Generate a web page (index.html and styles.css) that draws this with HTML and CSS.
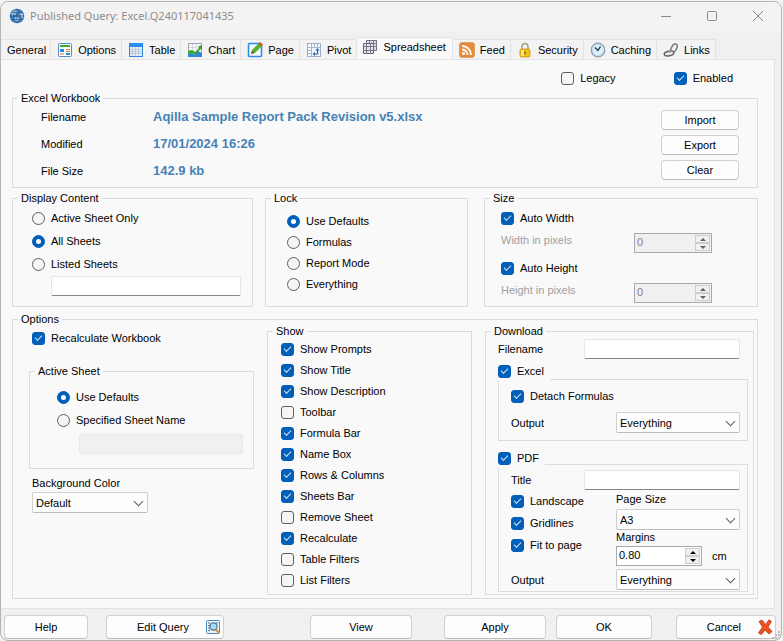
FILE: index.html
```html
<!DOCTYPE html>
<html lang="en">
<head>
    <meta charset="UTF-8">
    <meta name="viewport" content="width=device-width, initial-scale=1.0">
    <title>Published Query: Excel.Q240117041435</title>
    <link rel="stylesheet" href="styles.css">
</head>
<body>
    <div class="window">
        <header class="titlebar">
            <svg class="icon" viewBox="0 0 16 16">
                <circle cx="8" cy="8" r="7.3" fill="#3d7fb8"/>
                <path d="M2 5l4-3 3 1-2 3-3 2zM10 4l4 2v4l-3-1zM5 10l4-1 2 3-4 2z" fill="#b5d8ee"/>
                <path d="M1 8h14M8 1v14M2.500 4.500h11M2.500 11.500h11M8 1C3.500 4 3.500 12 8 15M8 1c4.500 3 4.500 11 0 14" fill="none" stroke="#1f558c" stroke-width=".7"/>
            </svg>
            <span class="title">Published Query: Excel.Q240117041435</span>
            <button class="win-btn" aria-label="Minimize"><svg viewBox="0 0 12 12"><path d="M1 6.500h10"/></svg></button>
            <button class="win-btn" aria-label="Maximize"><svg viewBox="0 0 12 12"><rect x="1.500" y="1.500" width="9" height="9" rx="1"/></svg></button>
            <button class="win-btn" aria-label="Close"><svg viewBox="0 0 12 12"><path d="M1 1l10 10M11 1L1 11"/></svg></button>
        </header>

        <nav class="tabs" role="tablist">
            <button class="tab" role="tab">General</button>
            <button class="tab" role="tab">
                <svg class="icon" viewBox="0 0 16 16"><rect x="1.500" y="1.500" width="13" height="13" rx="1" fill="#fff" stroke="#5b8cc4"/><path d="M3 3h10v2H3z" fill="#3faa28"/><path d="M3 7h4v3H3z" fill="#1c8df0"/><path d="M9 7h4v1H9zM9 9h4v1H9zM3 11.500h4v1H3z" fill="#e07a2c"/><path d="M9 11h4v2H9z" fill="#1c8df0"/></svg>
                Options
            </button>
            <button class="tab" role="tab">
                <svg class="icon" viewBox="0 0 16 16"><rect x="1.500" y="1.500" width="13" height="13" fill="#e9f1fa" stroke="#2e86e0"/><path d="M1 1h14v4H1z" fill="#2b8df2"/><path d="M2 7.500h12M2 9.500h12M2 11.500h12M4.500 5v9M7.500 5v9M10.500 5v9" stroke="#aab9cc" stroke-width=".7"/></svg>
                Table
            </button>
            <button class="tab" role="tab">
                <svg class="icon" viewBox="0 0 16 16"><rect x="1.500" y="1.500" width="13" height="13" fill="#f7f7f7" stroke="#9aa5b0"/><path d="M5.500 2v8M9.500 2v5M2 5.500h8" stroke="#c3cbd3" stroke-width=".7"/><path d="M1 15v-3l4-1 3 2 3-4 4 2v4z" fill="#2f86e0"/><path d="M1 9l4-1 3 2 4-4-1-1.500 4-1.500v5l-1.500-1L8 13l-3-2-4 1.500z" fill="#36a52e"/></svg>
                Chart
            </button>
            <button class="tab" role="tab">
                <svg class="icon" viewBox="0 0 16 16"><rect x="1.500" y="1.500" width="13" height="13" rx="1" fill="#f4faff" stroke="#2e8be6" stroke-width="1.500"/><path d="M4 12l1-4 7-7 3 3-7 7z" fill="#55b233"/><path d="M4 12l1-3.500L7.500 11z" fill="#7a5a32"/><path d="M11.500 1.500L13 0l3 3-1.500 1.500z" fill="#e04a3a"/></svg>
                Page
            </button>
            <button class="tab" role="tab">
                <svg class="icon" viewBox="0 0 16 16"><rect x="1.500" y="1.500" width="13" height="13" fill="#f3f6fa" stroke="#9fb0c4"/><path d="M1.500 5.500h13M5.500 1.500v13M8.500 2v3M11.500 2v3M2 8.500h3M2 11.500h3" stroke="#a9b7c8"/><path d="M8 12h3.500V7" fill="none" stroke="#2763ad" stroke-width="1.200"/><path d="M9.500 8.500l2-2.500 2 2.500zM9 10l-2.500 2L9 14z" fill="#2763ad"/></svg>
                Pivot
            </button>
            <button class="tab active" role="tab" aria-selected="true">
                <svg class="icon" viewBox="0 0 16 16"><path d="M4.500 1.500h10v10h-10z" fill="#dcdce6" stroke="#70707c"/><path d="M7.500 1v10M11.500 1v10M4 4.500h11M4 7.500h11" stroke="#83838f"/><path d="M1.500 4.500h10v10h-10z" fill="#e3e3ee" stroke="#666673"/><path d="M4.500 4v11M8.500 4v11M1 7.500h11M1 11.500h11" stroke="#777784"/></svg>
                Spreadsheet
            </button>
            <button class="tab" role="tab">
                <svg class="icon" viewBox="0 0 16 16"><rect x=".5" y=".5" width="15" height="15" rx="2.500" fill="#e88a38" stroke="#d9a066"/><circle cx="4.500" cy="11.500" r="1.500" fill="#fff"/><path d="M3 7.500A5.500 5.500 0 0 1 8.500 13M3 4a9 9 0 0 1 9 9" fill="none" stroke="#fff" stroke-width="1.800"/></svg>
                Feed
            </button>
            <button class="tab" role="tab">
                <svg class="icon" viewBox="0 0 16 16"><path d="M5 8V4.500a3 3 0 0 1 6 0V8" fill="none" stroke="#a9a080" stroke-width="1.600"/><rect x="3" y="7" width="10" height="8" rx="1.500" fill="#f5c116" stroke="#c98a0c" stroke-width=".8"/><path d="M4 8h3v6H4z" fill="#ffe778"/><path d="M8 9.500v3" stroke="#8d5f08" stroke-width="1.400"/></svg>
                Security
            </button>
            <button class="tab" role="tab">
                <svg class="icon" viewBox="0 0 16 16"><circle cx="8" cy="8" r="6.800" fill="#c4e0f0" stroke="#8ba0ae" stroke-width="1.200"/><circle cx="8" cy="8" r="5" fill="#dcf1fb"/><path d="M5 5.500L8 8.500 10.500 4.500" fill="none" stroke="#2b3540" stroke-width="1.400"/></svg>
                Caching
            </button>
            <button class="tab" role="tab">
                <svg class="icon" viewBox="0 0 16 16"><ellipse cx="11" cy="6" rx="2.500" ry="4.500" transform="rotate(30 11 6)" fill="#f4f4f4" stroke="#777" stroke-width="1.500"/><ellipse cx="6" cy="11.500" rx="4.800" ry="2.300" transform="rotate(-12 6 11.500)" fill="#e6e6e6" stroke="#666" stroke-width="1.500"/><path d="M6 10l4-1.500" stroke="#999" stroke-width="1.500"/></svg>
                Links
            </button>
        </nav>

        <main class="page">
            <div class="flags">
                <label class="check"><input type="checkbox">Legacy</label>
                <label class="check"><input type="checkbox" checked>Enabled</label>
            </div>

            <fieldset class="group workbook">
                <legend>Excel Workbook</legend>
                <dl class="facts">
                    <dt>Filename</dt><dd>Aqilla Sample Report Pack Revision v5.xlsx</dd>
                    <dt>Modified</dt><dd>17/01/2024 16:26</dd>
                    <dt>File Size</dt><dd>142.9 kb</dd>
                </dl>
                <div class="workbook-actions">
                    <button class="btn">Import</button>
                    <button class="btn">Export</button>
                    <button class="btn">Clear</button>
                </div>
            </fieldset>

            <div class="row-three">
                <fieldset class="group display">
                    <legend>Display Content</legend>
                    <label class="check"><input type="radio" name="display">Active Sheet Only</label>
                    <label class="check"><input type="radio" name="display" checked>All Sheets</label>
                    <label class="check"><input type="radio" name="display">Listed Sheets</label>
                    <input class="text" type="text" aria-label="Listed sheets">
                </fieldset>

                <fieldset class="group lock">
                    <legend>Lock</legend>
                    <label class="check"><input type="radio" name="lock" checked>Use Defaults</label>
                    <label class="check"><input type="radio" name="lock">Formulas</label>
                    <label class="check"><input type="radio" name="lock">Report Mode</label>
                    <label class="check"><input type="radio" name="lock">Everything</label>
                </fieldset>

                <fieldset class="group size">
                    <legend>Size</legend>
                    <label class="check"><input type="checkbox" checked>Auto Width</label>
                    <div class="field">
                        <label class="muted" for="width">Width in pixels</label>
                        <span class="spin disabled">
                            <input id="width" type="text" value="0" disabled>
                            <span class="spin-btns"><button class="up" disabled aria-label="Increase"></button><button class="down" disabled aria-label="Decrease"></button></span>
                        </span>
                    </div>
                    <label class="check"><input type="checkbox" checked>Auto Height</label>
                    <div class="field">
                        <label class="muted" for="height">Height in pixels</label>
                        <span class="spin disabled">
                            <input id="height" type="text" value="0" disabled>
                            <span class="spin-btns"><button class="up" disabled aria-label="Increase"></button><button class="down" disabled aria-label="Decrease"></button></span>
                        </span>
                    </div>
                </fieldset>
            </div>

            <fieldset class="group options">
                <legend>Options</legend>
                <div class="options-left">
                    <label class="check recalc"><input type="checkbox" checked>Recalculate Workbook</label>
                    <fieldset class="group active-sheet">
                        <legend>Active Sheet</legend>
                        <label class="check"><input type="radio" name="sheet" checked>Use Defaults</label>
                        <label class="check"><input type="radio" name="sheet">Specified Sheet Name</label>
                        <input class="text" type="text" disabled aria-label="Sheet name">
                    </fieldset>
                    <div class="bgcolor">
                        <label for="bgcolor">Background Color</label>
                        <span class="select"><select id="bgcolor"><option>Default</option></select></span>
                    </div>
                </div>

                <fieldset class="group show">
                    <legend>Show</legend>
                    <label class="check"><input type="checkbox" checked>Show Prompts</label>
                    <label class="check"><input type="checkbox" checked>Show Title</label>
                    <label class="check"><input type="checkbox" checked>Show Description</label>
                    <label class="check"><input type="checkbox">Toolbar</label>
                    <label class="check"><input type="checkbox" checked>Formula Bar</label>
                    <label class="check"><input type="checkbox" checked>Name Box</label>
                    <label class="check"><input type="checkbox" checked>Rows &amp; Columns</label>
                    <label class="check"><input type="checkbox" checked>Sheets Bar</label>
                    <label class="check"><input type="checkbox">Remove Sheet</label>
                    <label class="check"><input type="checkbox" checked>Recalculate</label>
                    <label class="check"><input type="checkbox">Table Filters</label>
                    <label class="check"><input type="checkbox">List Filters</label>
                </fieldset>

                <fieldset class="group download">
                    <legend>Download</legend>
                    <div class="field filename">
                        <label for="filename">Filename</label>
                        <input class="text" id="filename" type="text">
                    </div>

                    <label class="check box-head"><input type="checkbox" checked>Excel</label>
                    <div class="box excel">
                        <label class="check"><input type="checkbox" checked>Detach Formulas</label>
                        <div class="field">
                            <label for="excel-output">Output</label>
                            <span class="select"><select id="excel-output"><option>Everything</option></select></span>
                        </div>
                    </div>

                    <label class="check box-head pdf-head"><input type="checkbox" checked>PDF</label>
                    <div class="box pdf">
                        <div class="field">
                            <label for="pdf-title">Title</label>
                            <input class="text" id="pdf-title" type="text">
                        </div>
                        <div class="pdf-grid">
                            <div class="pdf-checks">
                                <label class="check"><input type="checkbox" checked>Landscape</label>
                                <label class="check"><input type="checkbox" checked>Gridlines</label>
                                <label class="check"><input type="checkbox" checked>Fit to page</label>
                            </div>
                            <div class="pdf-page">
                                <label for="page-size">Page Size</label>
                                <span class="select"><select id="page-size"><option>A3</option></select></span>
                                <label for="margins">Margins</label>
                                <div class="margins">
                                    <span class="spin">
                                        <input id="margins" type="text" value="0.80">
                                        <span class="spin-btns"><button class="up" aria-label="Increase"></button><button class="down" aria-label="Decrease"></button></span>
                                    </span>
                                    <span>cm</span>
                                </div>
                            </div>
                        </div>
                        <div class="field">
                            <label for="pdf-output">Output</label>
                            <span class="select"><select id="pdf-output"><option>Everything</option></select></span>
                        </div>
                    </div>
                </fieldset>
            </fieldset>
        </main>

        <footer class="footer">
            <button class="btn help">Help</button>
            <button class="btn edit">Edit Query
                <svg class="icon" viewBox="0 0 16 16"><rect x="1.500" y="1.500" width="13" height="13" rx="1" fill="#eaf4fc" stroke="#4a8cc8"/><path d="M3 4h2M3 6.500h2M3 9h2M3 11.500h2M11 4h2M11 12h2" stroke="#56718c"/><circle cx="8.500" cy="7.500" r="3.600" fill="#a8dcf6" stroke="#4f6f8c" stroke-width="1.200"/><path d="M11 10.500l3.500 4" stroke="#d89a3a" stroke-width="2.200"/></svg>
            </button>
            <button class="btn view">View</button>
            <button class="btn apply">Apply</button>
            <button class="btn ok">OK</button>
            <button class="btn cancel">Cancel
                <svg class="icon" viewBox="0 0 16 16"><path d="M2 2.500L5 1l3.500 4.500L12 .8l2.500 1.700L11 8l4 4.500-3 2.500-4-4-3.500 4.500L1.500 14 5.500 8z" fill="#f0501e" stroke="#b93a16" stroke-width=".8"/></svg>
            </button>
            <svg class="grip" viewBox="0 0 8 8"><path d="M6 0h2v2H6zM3 3h2v2H3zM6 3h2v2H6zM0 6h2v2H0zM3 6h2v2H3zM6 6h2v2H6z" fill="#bdbdbd"/></svg>
        </footer>
    </div>
</body>
</html>
```
FILE: styles.css
```css
* {
    box-sizing: border-box;
}

body {
    margin: 0;
    padding: 1px 1px 0 0;
    background: #f4f4f4;
    color: #000;
    font: 11px/14px "Liberation Sans", Arial, sans-serif;
}

button,
input,
select {
    margin: 0;
    font: inherit;
    color: inherit;
}

.window {
    position: relative;
    display: flex;
    flex-direction: column;
    min-height: calc(100vh - 1px);
    border: 1px solid #b4b4b4;
    border-radius: 8px;
    background: #f0f0f0;
}

.icon {
    flex: none;
    width: 16px;
    height: 16px;
}

/* title bar */
.titlebar {
    display: flex;
    align-items: center;
    height: 30px;
    padding: 0 7px 2px 8px;
    border-radius: 8px 8px 0 0;
    background: #f3f3f3;
    color: #8c8c8c;
}

.title {
    flex: 1;
    margin-left: 5px;
    font: 11px/16px "Noto Sans", "Open Sans", sans-serif;
}

.win-btn {
    width: 32px;
    height: 20px;
    margin-left: 14px;
    padding: 0;
    border: 0;
    background: none;
}

.win-btn svg {
    display: block;
    width: 12px;
    height: 12px;
    margin: 0 auto;
    fill: none;
    stroke: #8a8a8a;
}

/* tabs */
.tabs {
    display: flex;
    align-items: flex-end;
    height: 27px;
    padding-left: 1px;
}

.tab {
    display: flex;
    align-items: center;
    gap: 5px;
    height: 20px;
    padding: 0 5px 0 6px;
    border: 1px solid #e3e3e3;
    border-width: 1px 1px 0 0;
    background: #f3f3f3;
}

.tab:first-child {
    padding: 0 4px 0 5px;
}

.tab.active {
    height: 22px;
    padding: 0 6px 3px 5px;
    background: #f9f9f9;
}

/* page */
.page {
    flex: 1;
    margin-right: 6px;
    padding: 11px 16px 8px 11px;
    border: 1px solid #e3e3e3;
    border-left: 0;
    background: #f9f9f9;
}

.flags {
    display: flex;
    justify-content: flex-end;
    gap: 58px;
    padding: 0 25px 6px 0;
}

.check {
    display: flex;
    align-items: center;
    gap: 6px;
}

.check input {
    appearance: none;
    flex: none;
    display: flex;
    align-items: center;
    justify-content: center;
    width: 13px;
    height: 13px;
    border: 1px solid #5f5f5f;
    border-radius: 3px;
    background: #f5f5f5;
}

.check input[type="radio"] {
    border-radius: 50%;
}

.check input:checked {
    border-color: #005fb8;
    background: #005fb8;
}

.check input[type="checkbox"]:checked::before {
    content: "";
    width: 6px;
    height: 3px;
    margin-bottom: 2px;
    border: solid #d5e5f4;
    border-width: 0 0 1px 1px;
    transform: rotate(-45deg);
}

.check input[type="radio"]:checked::before {
    content: "";
    width: 5px;
    height: 5px;
    border-radius: 50%;
    background: #fff;
}

/* --pad is the left padding; the legend ignores it */
.group {
    min-width: 0;
    margin: 0;
    padding: 0;
    border: 1px solid #dcdcdc;
}

.group > legend {
    margin-left: calc(5px - var(--pad));
    padding: 0 3px;
}

.btn {
    height: 20px;
    padding: 0;
    border: 1px solid #d0d0d0;
    border-bottom-color: #bcbcbc;
    border-radius: 4px;
    background: #fdfdfd;
}

.text {
    height: 20px;
    min-width: 0;
    padding: 0 4px;
    border: 1px solid #e5e5e5;
    border-bottom-color: #868686;
    border-radius: 2px;
    background: #fff;
}

.text:disabled {
    border-color: #e8e8e8;
    background: #f0f0f0;
}

.select {
    position: relative;
    display: block;
}

.select select {
    appearance: none;
    display: block;
    width: 100%;
    height: 21px;
    padding: 0 20px 0 3px;
    border: 1px solid #d0d0d0;
    border-bottom-color: #bcbcbc;
    border-radius: 2px;
    background: #fdfdfd;
}

.select::after {
    content: "";
    position: absolute;
    top: 6px;
    right: 6px;
    width: 6px;
    height: 6px;
    border: solid #606060;
    border-width: 0 1px 1px 0;
    transform: rotate(45deg);
    pointer-events: none;
}

.spin {
    display: flex;
    width: 78px;
    height: 20px;
    padding: 1px;
    border: 1px solid #a5a8ad;
    background: #fff;
}

.spin input {
    flex: 1;
    min-width: 0;
    padding: 0 0 2px 1px;
    border: 0;
    background: none;
}

.spin-btns {
    display: flex;
    flex-direction: column;
    width: 15px;
}

.spin-btns button {
    display: flex;
    flex: 1;
    align-items: center;
    justify-content: center;
    padding: 0;
    border: 1px solid #cdcdcd;
    background: #f0f0f0;
}

.spin-btns button::before {
    content: "";
    border: 3px solid transparent;
}

.spin-btns .up::before {
    border-top: 0;
    border-bottom-color: #000;
}

.spin-btns .down::before {
    border-bottom: 0;
    border-top-color: #000;
}

.spin.disabled {
    background: #f0f0f0;
    color: #8c7f78;
}

.spin.disabled .up::before {
    border-bottom-color: #606060;
}

.spin.disabled .down::before {
    border-top-color: #606060;
}

.field {
    display: flex;
    align-items: center;
    justify-content: space-between;
}

.muted {
    color: #a0a0a0;
}

/* excel workbook */
.workbook {
    --pad: 28px;
    display: flex;
    align-items: flex-start;
    justify-content: space-between;
    padding: 5px 18px 7px var(--pad);
}

.facts {
    display: grid;
    grid-template-columns: 112px auto;
    row-gap: 13px;
    margin: 0;
}

.facts dd {
    margin: 0;
    color: #4682b4;
    font: bold 13px/14px "Liberation Sans", Arial, sans-serif;
}

.workbook-actions {
    display: flex;
    flex-direction: column;
    gap: 5px;
    width: 78px;
}

/* display, lock, size */
.row-three {
    display: grid;
    grid-template-columns: minmax(0, 241fr) minmax(0, 203fr) minmax(0, 278fr);
    gap: 12px;
    margin-top: 3px;
}

.display,
.lock,
.size {
    display: flex;
    flex-direction: column;
}

.display {
    --pad: 19px;
    gap: 9px;
    padding: 6px 11px 9px var(--pad);
}

.display .text {
    margin: -4px 0 0 19px;
}

.lock {
    --pad: 21px;
    gap: 7px;
    padding: 9px 19px 9px var(--pad);
}

.size {
    --pad: 16px;
    gap: 8px;
    margin-left: 4px;
    padding: 6px 45px 3px var(--pad);
}

.size .field {
    align-items: flex-start;
}

/* options */
.options {
    --pad: 16px;
    display: grid;
    grid-template-columns: minmax(0, 225fr) minmax(0, 205fr) minmax(0, 269fr);
    gap: 13px;
    margin-top: 5px;
    padding: 0 3px 3px var(--pad);
}

.recalc {
    margin: 5px 0 19px 3px;
}

.active-sheet {
    --pad: 27px;
    display: flex;
    flex-direction: column;
    gap: 9px;
    padding: 12px 10px 14px var(--pad);
}

.active-sheet .text {
    margin: -2px 0 0 22px;
}

.bgcolor {
    width: 119px;
    padding: 7px 0 0 3px;
    white-space: nowrap;
}

.bgcolor .select {
    margin-top: 2px;
}

.show {
    --pad: 13px;
    display: flex;
    flex-direction: column;
    gap: 7px;
    margin-top: -2px;
    padding: 4px 13px 7px var(--pad);
}

.download {
    --pad: 12px;
    margin-top: -2px;
    padding: 1px 5px 1px var(--pad);
}

.download .text {
    width: 156px;
}

.download .select {
    width: 124px;
}

.filename {
    padding-right: 8px;
}

.box-head {
    position: relative;
    width: 52px;
    height: 18px;
    margin-top: 3px;
    background: #f9f9f9;
}

.pdf-head {
    width: 47px;
    margin-top: 8px;
}

.box {
    display: flex;
    flex-direction: column;
    margin-top: -1px;
    border: 1px solid #dcdcdc;
    padding: 9px 7px 7px 12px;
}

.box.excel {
    gap: 9px;
}

.box.pdf {
    gap: 2px;
    margin-top: -3px;
    padding: 5px 7px 1px 12px;
}

.pdf-grid {
    display: flex;
    justify-content: space-between;
}

.pdf-checks {
    display: flex;
    flex-direction: column;
    gap: 8px;
    padding-top: 2px;
}

.pdf-page {
    width: 124px;
}

.pdf-page .select {
    margin: 3px 0 0;
}

.margins {
    display: flex;
    align-items: center;
    gap: 10px;
    margin: 2px 0 1px;
}

.margins .spin {
    width: 86px;
}

/* footer */
.footer {
    display: flex;
    padding: 6px 5px 1px 3px;
}

.footer .btn {
    display: flex;
    align-items: center;
    justify-content: center;
    height: 24px;
}

.help {
    width: 84px;
}

.footer .edit,
.footer .cancel {
    gap: 16px;
    justify-content: flex-end;
    padding-right: 2px;
}

.edit {
    width: 118px;
    margin: 0 auto 0 18px;
}

.view,
.apply {
    width: 102px;
}

.apply {
    margin: 0 10px 0 32px;
}

.ok {
    width: 96px;
}

.cancel {
    width: 100px;
    margin-left: 24px;
}

.grip {
    position: absolute;
    right: 1px;
    bottom: 1px;
    width: 8px;
    height: 8px;
}
```
